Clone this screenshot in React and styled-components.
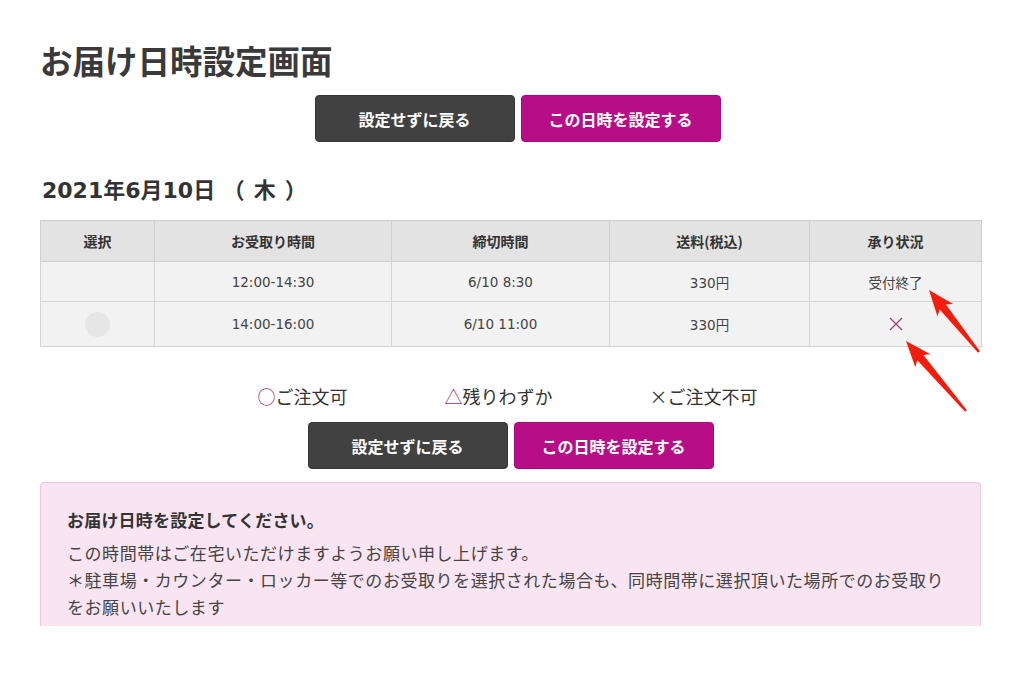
import React from 'react'
import styled, { createGlobalStyle } from 'styled-components'

const GlobalStyle = createGlobalStyle`
	body {
		margin: 0;
		background: #fff;
		font-family: "Noto Sans CJK JP", "Noto Sans", sans-serif;
		color: #333;
	}
`

const rows = [
	{ select: false, time: '12:00-14:30', deadline: '6/10 8:30', fee: '330円', status: '受付終了' },
	{ select: true, time: '14:00-16:00', deadline: '6/10 11:00', fee: '330円', status: 'cross' },
]

// arrow polygon from tail to tip
const arrowPoints = (tail, tip) => {
	const dx = tip[0] - tail[0]
	const dy = tip[1] - tail[1]
	const len = Math.hypot(dx, dy)
	const ux = dx / len, uy = dy / len
	const nx = -uy, ny = ux
	const head = 26, hw = 10, sw = 4, tw = 1.2
	const bx = tip[0] - ux * head, by = tip[1] - uy * head
	const p = (x, y) => `${x.toFixed(1)},${y.toFixed(1)}`
	return [
		p(tip[0], tip[1]),
		p(bx + nx * hw, by + ny * hw),
		p(bx + ux * 4 + nx * sw, by + uy * 4 + ny * sw),
		p(tail[0] + nx * tw, tail[1] + ny * tw),
		p(tail[0] - nx * tw, tail[1] - ny * tw),
		p(bx + ux * 4 - nx * sw, by + uy * 4 - ny * sw),
		p(bx - nx * hw, by - ny * hw),
	].join(' ')
}

const Buttons = ({ shift, top }) => (
	<ButtonRow $shift={shift} $top={top}>
		<Button $kind="back">設定せずに戻る</Button>
		<Button $kind="set">この日時を設定する</Button>
	</ButtonRow>
)

export default function App() {
	return <Page>
		<GlobalStyle />
		<Title>お届け日時設定画面</Title>
		<Buttons shift={14} top={16} />
		<DateHeading>2021年6月10日 （<Wide>木</Wide>）</DateHeading>
		<Table>
			<thead>
				<tr>
					<Th $w={113}>選択</Th>
					<Th $w={236}>お受取り時間</Th>
					<Th $w={217}>締切時間</Th>
					<Th $w={199}>送料(税込)</Th>
					<Th>承り状況</Th>
				</tr>
			</thead>
			<tbody>
				{rows.map((r, i) =>
					<tr key={i}>
						<Td $tall={r.select}>{r.select && <Radio />}</Td>
						<Td>{r.time}</Td>
						<Td>{r.deadline}</Td>
						<Td>{r.fee}</Td>
						<Td>{r.status === 'cross'
							? <svg width="14" height="14" viewBox="0 0 14 14"><path d="M1 1L13 13M13 1L1 13" stroke="#9a3d83" strokeWidth="1.2" fill="none" /></svg>
							: r.status}</Td>
					</tr>
				)}
			</tbody>
		</Table>
		<Legend>
			<LegendItem><Mark $c="#a3287f">○</Mark>ご注文可</LegendItem>
			<LegendItem><Mark $c="#a3287f">△</Mark>残りわずか</LegendItem>
			<LegendItem><Mark $c="#333">×</Mark>ご注文不可</LegendItem>
		</Legend>
		<Buttons shift={0} top={14} />
		<Notice>
			<NoticeTitle>お届け日時を設定してください。</NoticeTitle>
			<NoticeText>
				この時間帯はご在宅いただけますようお願い申し上げます。<br />
				＊駐車場・カウンター・ロッカー等でのお受取りを選択された場合も、同時間帯に選択頂いた場所でのお受取り<br />
				をお願いいたします
			</NoticeText>
			<NoticeMore>ご注意事項</NoticeMore>
		</Notice>
		<Overlay width="1024" height="675" viewBox="0 0 1024 675">
			<polygon points={arrowPoints([979, 352], [929, 290])} fill="#f41d0d" />
			<polygon points={arrowPoints([966, 411], [906, 341])} fill="#f41d0d" />
		</Overlay>
	</Page>
}
// --------------------------------------------------------
const Page = styled.div`
	position: relative;
	width: 941px;
	padding: 41px 43px 0 40px;
	height: 634px;
	overflow: hidden;
`
// --------------------------------------------------------
const Title = styled.h1`
	margin: 0;
	font-size: 32.5px;
	line-height: 38px;
	font-weight: bold;
	color: #3a3a3a;
`
// --------------------------------------------------------
const ButtonRow = styled.div`
	display: flex;
	justify-content: center;
	gap: 6px;
	padding-left: ${p => p.$shift}px;
	margin-top: ${p => p.$top}px;
`
// --------------------------------------------------------
const Button = styled.div`
	width: 200px;
	height: 47px;
	box-sizing: border-box;
	display: flex;
	align-items: center;
	justify-content: center;
	border-radius: 4px;
	color: #fff;
	font-size: 16px;
	font-weight: bold;
	background: ${p => p.$kind === 'set' ? '#b70d87' : '#414141'};
	border: 1px solid ${p => p.$kind === 'set' ? '#a80a7b' : '#363636'};
`
// --------------------------------------------------------
const DateHeading = styled.h2`
	margin: 35px 0 0 2px;
	font-family: "DejaVu Sans", "Noto Sans CJK JP", sans-serif;
	font-size: 22px;
	line-height: 28px;
	font-weight: bold;
	color: #333;
`
// --------------------------------------------------------
const Wide = styled.span`margin: 0 9px;`
// --------------------------------------------------------
const Table = styled.table`
	margin-top: 15px;
	width: 942px;
	border-collapse: collapse;
	font-family: "DejaVu Sans", "Noto Sans CJK JP", sans-serif;
	font-size: 13.5px;
	color: #444;
`
// --------------------------------------------------------
const Th = styled.th`
	width: ${p => p.$w ? p.$w + 'px' : 'auto'};
	height: 40px;
	padding: 0;
	background: #e3e3e3;
	border: 1px solid #cfcfcf;
	font-family: "Noto Sans CJK JP", sans-serif;
	font-size: 14px;
	font-weight: bold;
	color: #333;
`
// --------------------------------------------------------
const Td = styled.td`
	height: ${p => p.$tall ? 44 : 39}px;
	padding: 0;
	text-align: center;
	vertical-align: middle;
	background: #f2f2f2;
	border: 1px solid #d4d4d4;
	svg { display: block; margin: 0 auto; }
`
// --------------------------------------------------------
const Radio = styled.span`
	display: block;
	margin: 0 auto;
	width: 25px;
	height: 25px;
	border-radius: 50%;
	background: #e6e6e6;
`
// --------------------------------------------------------
const Legend = styled.div`
	display: flex;
	justify-content: center;
	gap: 97px;
	padding-right: 6px;
	margin-top: 37px;
	font-size: 18px;
	line-height: 24px;
	color: #333;
`
// --------------------------------------------------------
const LegendItem = styled.span`
	display: flex;
	align-items: center;
`
// --------------------------------------------------------
const Mark = styled.span`color: ${p => p.$c};`
// --------------------------------------------------------
const Notice = styled.div`
	margin-top: 13px;
	height: 144px;
	box-sizing: border-box;
	overflow: hidden;
	background: #f9e4f1;
	border: 1px solid #f1c6df;
	border-bottom: none;
	border-radius: 4px 4px 0 0;
	padding: 25px 26px 0;
`
// --------------------------------------------------------
const NoticeTitle = styled.p`
	margin: 0;
	font-size: 17px;
	line-height: 24px;
	letter-spacing: 0.2px;
	font-weight: bold;
	color: #333;
`
// --------------------------------------------------------
const NoticeText = styled.p`
	margin: 7px 0 0;
	font-size: 17px;
	line-height: 27px;
	letter-spacing: 0.55px;
	color: #444;
	white-space: nowrap;
`
// --------------------------------------------------------
const NoticeMore = styled.p`
	margin: 0;
	text-align: center;
	font-size: 17px;
	line-height: 27px;
	font-weight: bold;
	color: #9c1675;
`
// --------------------------------------------------------
const Overlay = styled.svg`
	position: absolute;
	left: 0;
	top: 0;
	pointer-events: none;
`
